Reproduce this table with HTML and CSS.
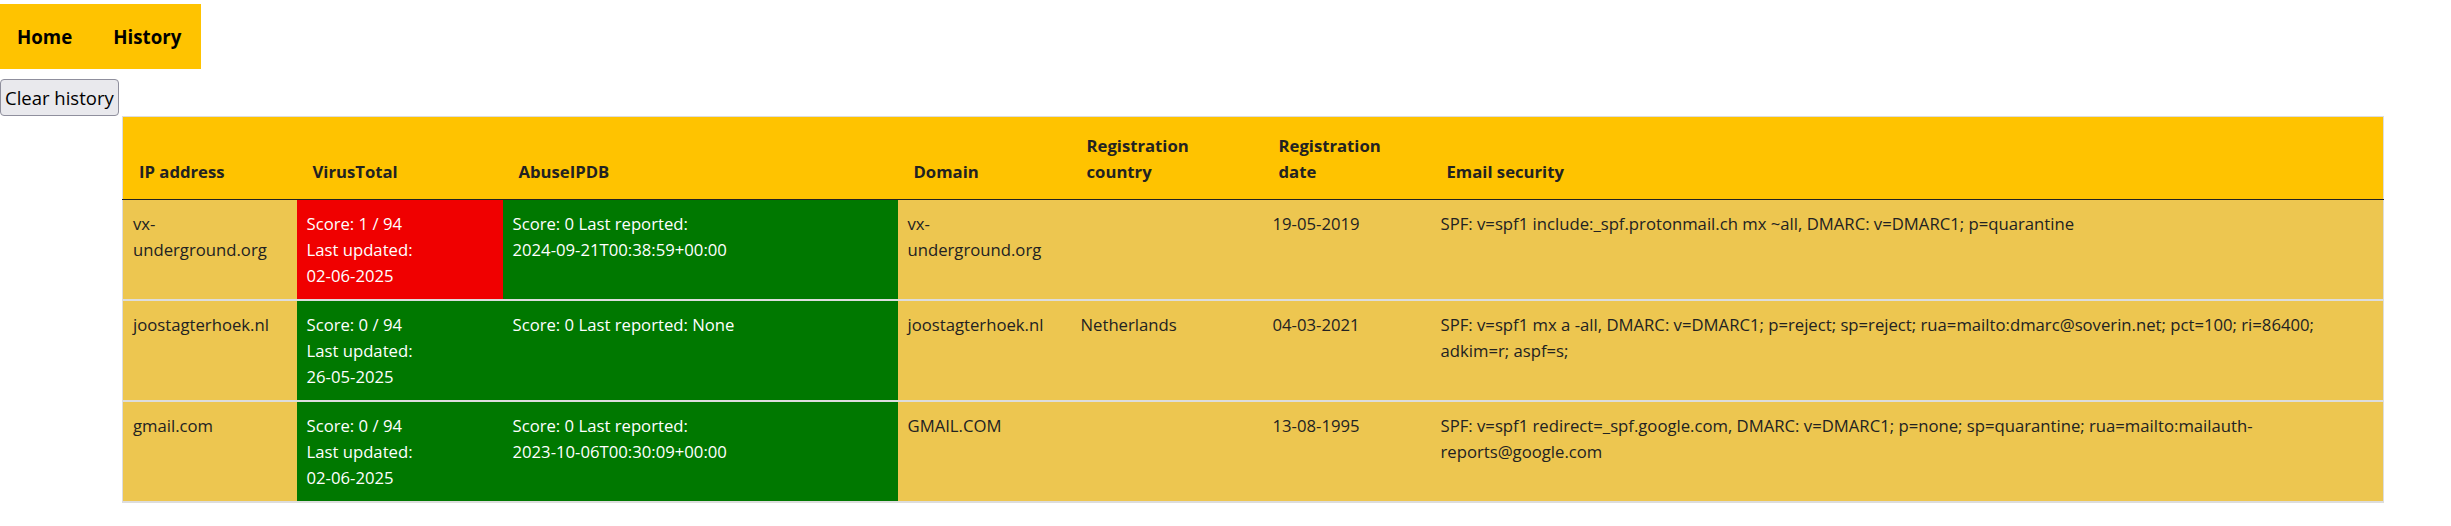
FILE: index.html
```html
<!DOCTYPE html>
<html lang="en">
<head>
<meta charset="utf-8">
<title>History</title>
<link rel="stylesheet" href="styles.css">
</head>
<body>
<nav class="topnav">
  <a class="nav-link" href="#">Home</a>
  <a class="nav-link" href="#">History</a>
</nav>
<button class="clear-btn" type="button">Clear history</button>
<table class="history">
  <colgroup>
    <col class="c-ip">
    <col class="c-vt">
    <col class="c-abuse">
    <col class="c-domain">
    <col class="c-country">
    <col class="c-date">
    <col class="c-email">
  </colgroup>
  <thead>
    <tr>
      <th>IP address</th>
      <th>VirusTotal</th>
      <th>AbuseIPDB</th>
      <th>Domain</th>
      <th>Registration country</th>
      <th>Registration date</th>
      <th>Email security</th>
    </tr>
  </thead>
  <tbody>
    <tr>
      <td>vx-underground.org</td>
      <td class="bad">Score: 1 / 94<br>Last updated: <span class="nowrap">02-06-2025</span></td>
      <td class="good">Score: 0 Last reported: <span class="nowrap">2024-09-21T00:38:59+00:00</span></td>
      <td>vx-underground.org</td>
      <td></td>
      <td>19-05-2019</td>
      <td>SPF: v=spf1 include:_spf.protonmail.ch mx ~all, DMARC: v=DMARC1; p=quarantine</td>
    </tr>
    <tr>
      <td>joostagterhoek.nl</td>
      <td class="good">Score: 0 / 94<br>Last updated: <span class="nowrap">26-05-2025</span></td>
      <td class="good">Score: 0 Last reported: None</td>
      <td>joostagterhoek.nl</td>
      <td>Netherlands</td>
      <td>04-03-2021</td>
      <td>SPF: v=spf1 mx a -all, DMARC: v=DMARC1; p=reject; sp=reject; rua=mailto:dmarc@soverin.net; pct=100; ri=86400; adkim=r; aspf=s;</td>
    </tr>
    <tr>
      <td>gmail.com</td>
      <td class="good">Score: 0 / 94<br>Last updated: <span class="nowrap">02-06-2025</span></td>
      <td class="good">Score: 0 Last reported: <span class="nowrap">2023-10-06T00:30:09+00:00</span></td>
      <td>GMAIL.COM</td>
      <td></td>
      <td>13-08-1995</td>
      <td>SPF: v=spf1 redirect=_spf.google.com, DMARC: v=DMARC1; p=none; sp=quarantine; rua=mailto:mailauth-reports@google.com</td>
    </tr>
  </tbody>
</table>
</body>
</html>
```
FILE: styles.css
```css
html, body {
  margin: 0;
  padding: 0;
  background: #ffffff;
}

body {
  font-family: "Open Sans", "Noto Sans", sans-serif;
  color: #222222;
}

.topnav {
  display: inline-flex;
  align-items: center;
  gap: 41px;
  height: 65px;
  margin-top: 4px;
  padding: 0 20px 0 17px;
  background: #ffc300;
}

.nav-link {
  font-size: 18.7px;
  font-weight: 700;
  color: #000000;
  text-decoration: none;
}

.clear-btn {
  display: block;
  margin: 10px 0 0 0;
  height: 37px;
  padding: 0 4px;
  font-family: "Open Sans", "Noto Sans", sans-serif;
  font-size: 18.5px;
  color: #000000;
  background: #e9e9ed;
  border: 1px solid #8f8f9d;
  border-radius: 4px;
}

.history {
  margin-left: 122px;
  width: 2261px;
  table-layout: fixed;
  border-collapse: collapse;
  border: 1px solid #dddddd;
  font-size: 16.7px;
  line-height: 26px;
}

.c-ip { width: 174px; }
.c-vt { width: 206px; }
.c-abuse { width: 395px; }
.c-domain { width: 173px; }
.c-country { width: 192px; }
.c-date { width: 168px; }
.c-email { width: 953px; }

.history thead tr {
  background: #ffc300;
  border-bottom: 1px solid #222222;
}

.history th {
  padding: 16px 16px 14px 16px;
  text-align: left;
  vertical-align: bottom;
  font-weight: 700;
  color: #222222;
}

.history tbody tr {
  background: #edc650;
  border-bottom: 2px solid #dddddd;
}

.history td {
  padding: 11px 10px 10px 10px;
  vertical-align: top;
  color: #222222;
  overflow-wrap: break-word;
}

.history td.bad {
  background: #f00000;
  color: #ffffff;
}

.history td.good {
  background: #007800;
  color: #ffffff;
}

.nowrap {
  white-space: nowrap;
}
```
